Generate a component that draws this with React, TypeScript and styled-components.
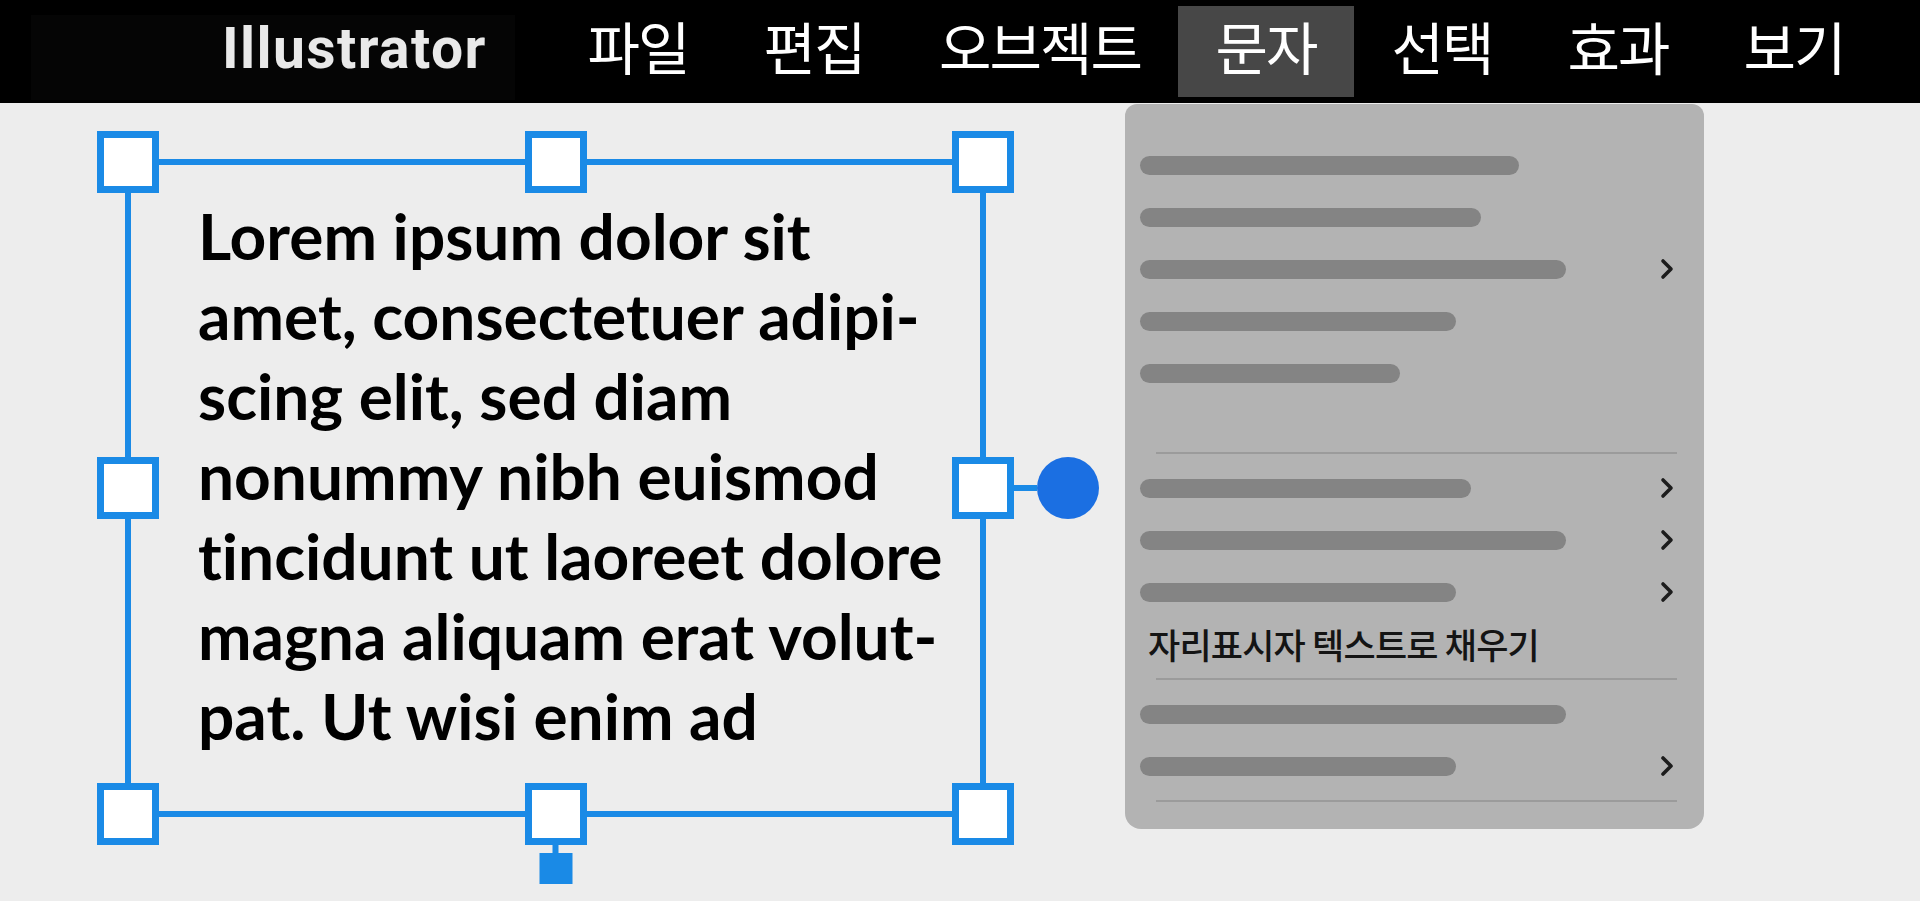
import React from 'react'
import styled, { createGlobalStyle } from 'styled-components'

const GlobalStyle = createGlobalStyle`
  html, body {
    margin: 0;
    padding: 0;
    background: #ededed;
  }
  * {
    box-sizing: border-box;
  }
`

const Page = styled.div`
  display: flex;
  flex-direction: column;
  width: 100%;
  height: 100vh;
  overflow: hidden;
  background: #ededed;
`

/* top menu bar */
const MenuBar = styled.header`
  display: flex;
  align-items: flex-start;
  height: 103px;
  background: #000;
  flex-shrink: 0;
  position: relative;
  z-index: 5;
`

const Brand = styled.div`
  display: flex;
  align-items: center;
  margin: 15px 0 0 31px;
  width: 484px;
  height: 85px;
  padding-left: 191px;
  padding-bottom: 18px;
  background: #050505;
`

const BrandText = styled.span`
  font-family: Roboto, 'Liberation Sans', sans-serif;
  font-weight: 700;
  font-size: 57px;
  color: #e9e9e9;
  letter-spacing: 1.4px;
`

const Menu = styled.nav`
  display: flex;
  margin-left: 35px;
`

const MenuItem = styled.div<{ $w: number; $active?: boolean }>`
  position: relative;
  display: flex;
  align-items: center;
  justify-content: center;
  width: ${p => p.$w}px;
  height: 91px;
  margin-top: 6px;
  padding-bottom: 14px;
  background: ${p => (p.$active ? '#474747' : 'transparent')};
  color: #fff;
  font-family: 'Noto Sans CJK KR', 'Noto Sans', sans-serif;
  font-size: 57px;
  font-weight: 400;
  letter-spacing: -2px;
  white-space: nowrap;
`

/* dropdown under 문자 */
const Dropdown = styled.div`
  position: absolute;
  top: 98px;
  left: -53px;
  width: 579px;
  height: 725px;
  padding-top: 35px;
  background: #b3b3b3;
  border-radius: 12px 12px 16px 16px;
  overflow: hidden;
  letter-spacing: normal;
`

const Row = styled.div`
  display: flex;
  align-items: center;
  justify-content: space-between;
  height: 52px;
  padding: 0 30px 0 15px;
`

const Bar = styled.div<{ $w: number }>`
  width: ${p => p.$w}px;
  height: 19px;
  border-radius: 10px;
  background: #848484;
`

const Spacer = styled.div`
  height: 45px;
`

const Separator = styled.div`
  height: 2px;
  margin: 8px 27px 8px 31px;
  background: #9b9b9b;
`

const LabelRow = styled.div`
  display: flex;
  align-items: center;
  height: 52px;
  padding: 0 0 2px 23px;
  font-family: 'Noto Sans CJK KR', 'Noto Sans', sans-serif;
  font-size: 35px;
  font-weight: 500;
  color: #141414;
  letter-spacing: -0.8px;
`

const Chevron = () => (
  <svg width="14" height="22" viewBox="0 0 14 22">
    <polyline points="3,3 11,11 3,19" fill="none" stroke="#1c1c1c" strokeWidth="3.6" strokeLinecap="round" strokeLinejoin="round" />
  </svg>
)

/* canvas + selected text frame */
const Canvas = styled.main`
  flex: 1;
  padding: 56px 0 0 125px;
  background: #ededed;
`

const Frame = styled.div`
  position: relative;
  width: 861px;
  height: 658px;
  border: 6px solid #1a8ae6;
  padding: 31px 0 0 67px;
`

const Paragraph = styled.p`
  margin: 0;
  font-family: Lato, 'Open Sans', sans-serif;
  font-weight: 700;
  font-size: 64px;
  line-height: 80px;
  color: #000;
  white-space: nowrap;
  font-variant-ligatures: none;
`

const Handle = styled.div<{ $x: 'l' | 'c' | 'r'; $y: 't' | 'm' | 'b' }>`
  position: absolute;
  left: ${p => (p.$x === 'l' ? '-3px' : p.$x === 'c' ? '50%' : 'calc(100% + 3px)')};
  top: ${p => (p.$y === 't' ? '-3px' : p.$y === 'm' ? '50%' : 'calc(100% + 3px)')};
  transform: translate(-50%, -50%);
  width: 62px;
  height: 62px;
  background: #fff;
  border: 7px solid #1a8ae6;
`

const RotateKnob = styled.div`
  position: absolute;
  left: calc(100% + 34px);
  top: 50%;
  transform: translateY(-50%);
  display: flex;
  align-items: center;
`

const KnobStem = styled.div`
  width: 23px;
  height: 6px;
  background: #1a8ae6;
`

const KnobDot = styled.div`
  width: 62px;
  height: 62px;
  border-radius: 50%;
  background: #1b6fe2;
`

const BottomAnchor = styled.div`
  position: absolute;
  left: 50%;
  top: calc(100% + 34px);
  transform: translateX(-50%);
  display: flex;
  flex-direction: column;
  align-items: center;
`

const AnchorStem = styled.div`
  width: 6px;
  height: 8px;
  background: #1a8ae6;
`

const AnchorSquare = styled.div`
  width: 33px;
  height: 31px;
  background: #1a8ae6;
`

const menuItems = [
  { label: '파일', w: 176 },
  { label: '편집', w: 176 },
  { label: '오브젝트', w: 276 },
  { label: '문자', w: 176 },
  { label: '선택', w: 176 },
  { label: '효과', w: 176 },
  { label: '보기', w: 176 },
]

const lines = [
  'Lorem ipsum dolor sit',
  'amet, consectetuer adipi-',
  'scing elit, sed diam',
  'nonummy nibh euismod',
  'tincidunt ut laoreet dolore',
  'magna aliquam erat volut-',
  'pat. Ut wisi enim ad',
]

const handles: Array<['l' | 'c' | 'r', 't' | 'm' | 'b']> = [
  ['l', 't'], ['c', 't'], ['r', 't'],
  ['l', 'm'], ['r', 'm'],
  ['l', 'b'], ['c', 'b'], ['r', 'b'],
]

const TypeMenu = () => (
  <Dropdown>
    <Row><Bar $w={379} /></Row>
    <Row><Bar $w={341} /></Row>
    <Row><Bar $w={426} /><Chevron /></Row>
    <Row><Bar $w={316} /></Row>
    <Row><Bar $w={260} /></Row>
    <Spacer />
    <Separator />
    <Row><Bar $w={331} /><Chevron /></Row>
    <Row><Bar $w={426} /><Chevron /></Row>
    <Row><Bar $w={316} /><Chevron /></Row>
    <LabelRow>자리표시자 텍스트로 채우기</LabelRow>
    <Separator />
    <Row><Bar $w={426} /></Row>
    <Row><Bar $w={316} /><Chevron /></Row>
    <Separator />
  </Dropdown>
)

const App: React.FC = () => {
  return (
    <Page>
      <GlobalStyle />
      <MenuBar>
        <Brand>
          <BrandText>Illustrator</BrandText>
        </Brand>
        <Menu>
          {menuItems.map(({ label, w }) => (
            <MenuItem key={label} $w={w} $active={label === '문자'}>
              {label}
              {label === '문자' && <TypeMenu />}
            </MenuItem>
          ))}
        </Menu>
      </MenuBar>

      <Canvas>
        <Frame>
          <Paragraph>
            {lines.map((line, i) => (
              <React.Fragment key={i}>
                {line}
                {i < lines.length - 1 && <br />}
              </React.Fragment>
            ))}
          </Paragraph>
          {handles.map(([x, y]) => (
            <Handle key={x + y} $x={x} $y={y} />
          ))}
          <RotateKnob>
            <KnobStem />
            <KnobDot />
          </RotateKnob>
          <BottomAnchor>
            <AnchorStem />
            <AnchorSquare />
          </BottomAnchor>
        </Frame>
      </Canvas>
    </Page>
  )
}

export default App
